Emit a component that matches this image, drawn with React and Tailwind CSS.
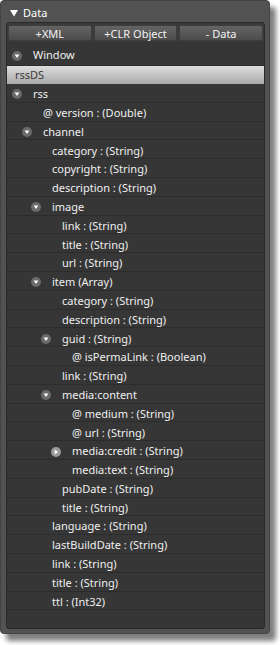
const rows = [
  [0, "rss", "open"],
  [1, "@ version : (Double)"],
  [1, "channel", "open"],
  [2, "category : (String)"],
  [2, "copyright : (String)"],
  [2, "description : (String)"],
  [2, "image", "open"],
  [3, "link : (String)"],
  [3, "title : (String)"],
  [3, "url : (String)"],
  [2, "item (Array)", "open"],
  [3, "category : (String)"],
  [3, "description : (String)"],
  [3, "guid : (String)", "open"],
  [4, "@ isPermaLink : (Boolean)"],
  [3, "link : (String)"],
  [3, "media:content", "open"],
  [4, "@ medium : (String)"],
  [4, "@ url : (String)"],
  [4, "media:credit : (String)", "closed"],
  [4, "media:text : (String)"],
  [3, "pubDate : (String)"],
  [3, "title : (String)"],
  [2, "language : (String)"],
  [2, "lastBuildDate : (String)"],
  [2, "link : (String)"],
  [2, "title : (String)"],
  [2, "ttl : (Int32)"],
];

const indent = ["pl-[5px]", "pl-[15px]", "pl-[24px]", "pl-[34px]", "pl-[44px]"];

function Expander({ open = true }) {
  return (
    <svg width="10" height="10" viewBox="0 0 10 10" className="shrink-0">
      <circle cx="5" cy="5" r="5" fill={open ? "#6a6a6a" : "#9a9a9a"} />
      {open ? (
        <polygon points="2.6,3.4 7.4,3.4 5,7" fill="#ffffff" />
      ) : (
        <polygon points="3.6,2.6 3.6,7.4 7.2,5" fill="#ffffff" />
      )}
    </svg>
  );
}

function Row({ level, label, kind }) {
  return (
    <div className={`flex items-center h-[18.8px] pt-[3px] border-b border-[#2c2c2c] ${indent[level]}`}>
      {kind ? <Expander open={kind === "open"} /> : <span className="w-[10px] shrink-0" />}
      <span className="ml-[11px] whitespace-nowrap">{label}</span>
    </div>
  );
}

export default function App() {
  return (
    <div
      className="w-[280px] h-[645px] bg-white text-[11px] text-[#efefef]"
      style={{ fontFamily: '"Noto Sans", "Open Sans", sans-serif' }}
    >
      <div className="w-[270px] h-[634px] rounded-[4px] bg-[#525252] border border-[#444] shadow-[6px_7px_5px_rgba(0,0,0,0.5)] flex flex-col">
        <div className="h-[21px] pt-[3px] flex items-center pl-[9px] gap-[5px] text-white">
          <svg width="8" height="8" viewBox="0 0 8 8">
            <polygon points="0,1 8,1 4,7.5" fill="#ffffff" />
          </svg>
          <span>Data</span>
        </div>
        <div className="ml-[5px] mr-[4px] mb-[4px] flex-1 rounded-[3px] border border-[#2a2a2a] bg-[#363636] flex flex-col overflow-hidden">
          <div className="flex gap-[2px] px-[1px] pt-[2px] pb-[1px] bg-[#3a3a3a]">
            {["+XML", "+CLR Object", "- Data"].map((b) => (
              <button
                key={b}
                className="w-[84px] h-[16px] rounded-[2px] bg-gradient-to-b from-[#646464] to-[#4c4c4c] border border-[#3e3e3e] leading-none text-[#f2f2f2]"
              >
                {b}
              </button>
            ))}
          </div>
          <div className="flex items-center h-[24px] pt-[4px] pl-[5px] border-b border-[#2c2c2c]">
            <Expander />
            <span className="ml-[11px]">Window</span>
          </div>
          <div className="h-[18px] flex items-center pl-[8px] bg-gradient-to-b from-[#dedede] to-[#a9a9a9] text-[#3a3a3a]">
            rssDS
          </div>
          {rows.map(([level, label, kind], i) => (
            <Row key={i} level={level} label={label} kind={kind} />
          ))}
        </div>
      </div>
    </div>
  );
}
